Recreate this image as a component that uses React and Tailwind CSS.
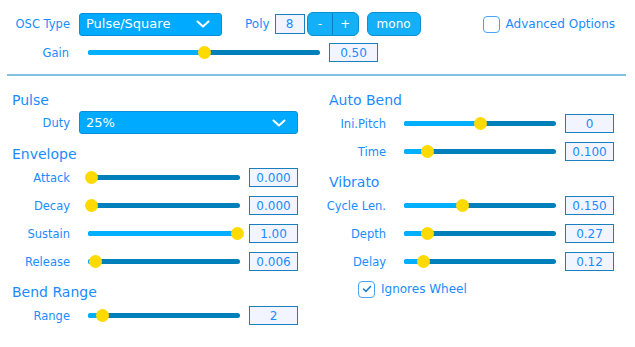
import React from "react";

const Chevron = () => (
  <svg width="14" height="8" viewBox="0 0 14 8" fill="none">
    <path d="M1.5 1.5 L7 6.5 L12.5 1.5" stroke="white" strokeWidth="2" strokeLinecap="round" strokeLinejoin="round" />
  </svg>
);

const Select = ({ value, className }) => (
  <div
    className={
      "flex h-[23px] items-center justify-between rounded-[3px] border border-[#0b8ed6] bg-[#00aaff] pl-[6px] pr-[11px] text-[13px] text-white " +
      className
    }
  >
    <span>{value}</span>
    <Chevron />
  </div>
);

const Slider = ({ pos, width = 152 }) => {
  const center = 3 + pos * (width - 6);
  return (
    <div className="relative flex h-[19px] items-center" style={{ width }}>
      <div className="flex h-[5px] w-full overflow-hidden rounded-full bg-[#0080bb]">
        <div className="h-full bg-[#00b0ff]" style={{ width: center }} />
      </div>
      <div
        className="absolute top-[3px] h-[13px] w-[13px] rounded-full bg-[#ffda00]"
        style={{ left: center - 6.5 }}
      />
    </div>
  );
};

const ValueBox = ({ value, className = "w-[49px]" }) => (
  <div
    className={
      "flex h-[19px] items-center justify-center border border-[#1a7fbf] bg-[#f2f4ff] text-[12px] text-[#1a8cff] " +
      className
    }
  >
    {value}
  </div>
);

const Label = ({ children, className = "w-[70px]" }) => (
  <div className={"pt-[2px] text-right text-[11.5px] text-[#1a8cff] " + className}>{children}</div>
);

const SliderRow = ({ label, pos, value, className = "" }) => (
  <div className={"flex h-[19px] items-center " + className}>
    <Label>{label}</Label>
    <div className="ml-[18px]">
      <Slider pos={pos} />
    </div>
    <ValueBox value={value} className="ml-[9px] w-[49px]" />
  </div>
);

const Heading = ({ children, className = "" }) => (
  <div className={"flex h-5 items-center text-[14px] text-[#1a8cff] " + className}>{children}</div>
);

const Checkbox = ({ checked }) => (
  <div className="flex h-[17px] w-[17px] items-center justify-center rounded-[4px] border-[1.5px] border-[#4aa3f5] bg-white">
    {checked && (
      <svg width="10" height="8" viewBox="0 0 10 8" fill="none">
        <path d="M1.5 4 L4 6.3 L8.5 1.5" stroke="#1a7fd0" strokeWidth="1.6" strokeLinecap="round" strokeLinejoin="round" />
      </svg>
    )}
  </div>
);

export default function App() {
  return (
    <div className="h-[347px] w-[635px] bg-white pt-[12px] font-['DejaVu_Sans',sans-serif]">
      {/* top controls */}
      <div className="flex h-[24px] items-center">
        <Label>OSC Type</Label>
        <Select value="Pulse/Square" className="ml-[9px] w-[143px]" />
        <div className="ml-[23px] text-[12px] text-[#1a8cff]">Poly</div>
        <ValueBox value="8" className="ml-[5px] h-[20px] w-[30px]" />
        <div className="ml-[2px] flex h-[24px] w-[52px] overflow-hidden rounded-[6px] border border-[#0a8fd0] bg-[#14b0f7] text-[12px] text-white">
          <div className="flex flex-1 items-center justify-center border-r border-[#0a7fc0]">-</div>
          <div className="flex flex-1 items-center justify-center">+</div>
        </div>
        <div className="ml-[8px] flex h-[24px] w-[54px] items-center justify-center rounded-[6px] border border-[#0a8fd0] bg-[#14b0f7] text-[12px] text-white">
          mono
        </div>
        <div className="ml-[62px]">
          <Checkbox />
        </div>
        <div className="ml-[6px] text-[12px] text-[#1a8cff]">Advanced Options</div>
      </div>
      <div className="mt-[7px] flex h-[19px] items-center">
        <Label className="w-[69px]">Gain</Label>
        <div className="ml-[19px]">
          <Slider pos={0.5} width={232} />
        </div>
        <ValueBox value="0.50" className="ml-[9px] w-[49px]" />
      </div>
      <div className="ml-[7px] mt-[12px] h-[2px] w-[619px] bg-[#84c0e2]" />

      <div className="flex pt-[14px]">
        {/* left column */}
        <div className="w-[316px]">
          <Heading className="pl-[12px]">Pulse</Heading>
          <div className="mt-px flex items-center">
            <Label>Duty</Label>
            <Select value="25%" className="ml-[9px] w-[219px]" />
          </div>
          <Heading className="mt-[10px] pl-[12px]">Envelope</Heading>
          <SliderRow label="Attack" pos={0} value="0.000" className="mt-[4px]" />
          <SliderRow label="Decay" pos={0} value="0.000" className="mt-[9px]" />
          <SliderRow label="Sustain" pos={1} value="1.00" className="mt-[9px]" />
          <SliderRow label="Release" pos={0.034} value="0.006" className="mt-[9px]" />
          <Heading className="mt-[11px] pl-[12px]">Bend Range</Heading>
          <SliderRow label="Range" pos={0.082} value="2" className="mt-[4px]" />
        </div>

        {/* right column */}
        <div className="w-[319px]">
          <Heading className="pl-[13px]">Auto Bend</Heading>
          <SliderRow label="Ini.Pitch" pos={0.5} value="0" className="mt-[4px]" />
          <SliderRow label="Time" pos={0.137} value="0.100" className="mt-[9px]" />
          <Heading className="mt-[11px] pl-[13px]">Vibrato</Heading>
          <SliderRow label="Cycle Len." pos={0.377} value="0.150" className="mt-[4px]" />
          <SliderRow label="Depth" pos={0.137} value="0.27" className="mt-[9px]" />
          <SliderRow label="Delay" pos={0.116} value="0.12" className="mt-[9px]" />
          <div className="mt-[9px] flex items-center pl-[42px]">
            <Checkbox checked />
            <div className="ml-[6px] text-[12px] text-[#1a8cff]">Ignores Wheel</div>
          </div>
        </div>
      </div>
    </div>
  );
}
